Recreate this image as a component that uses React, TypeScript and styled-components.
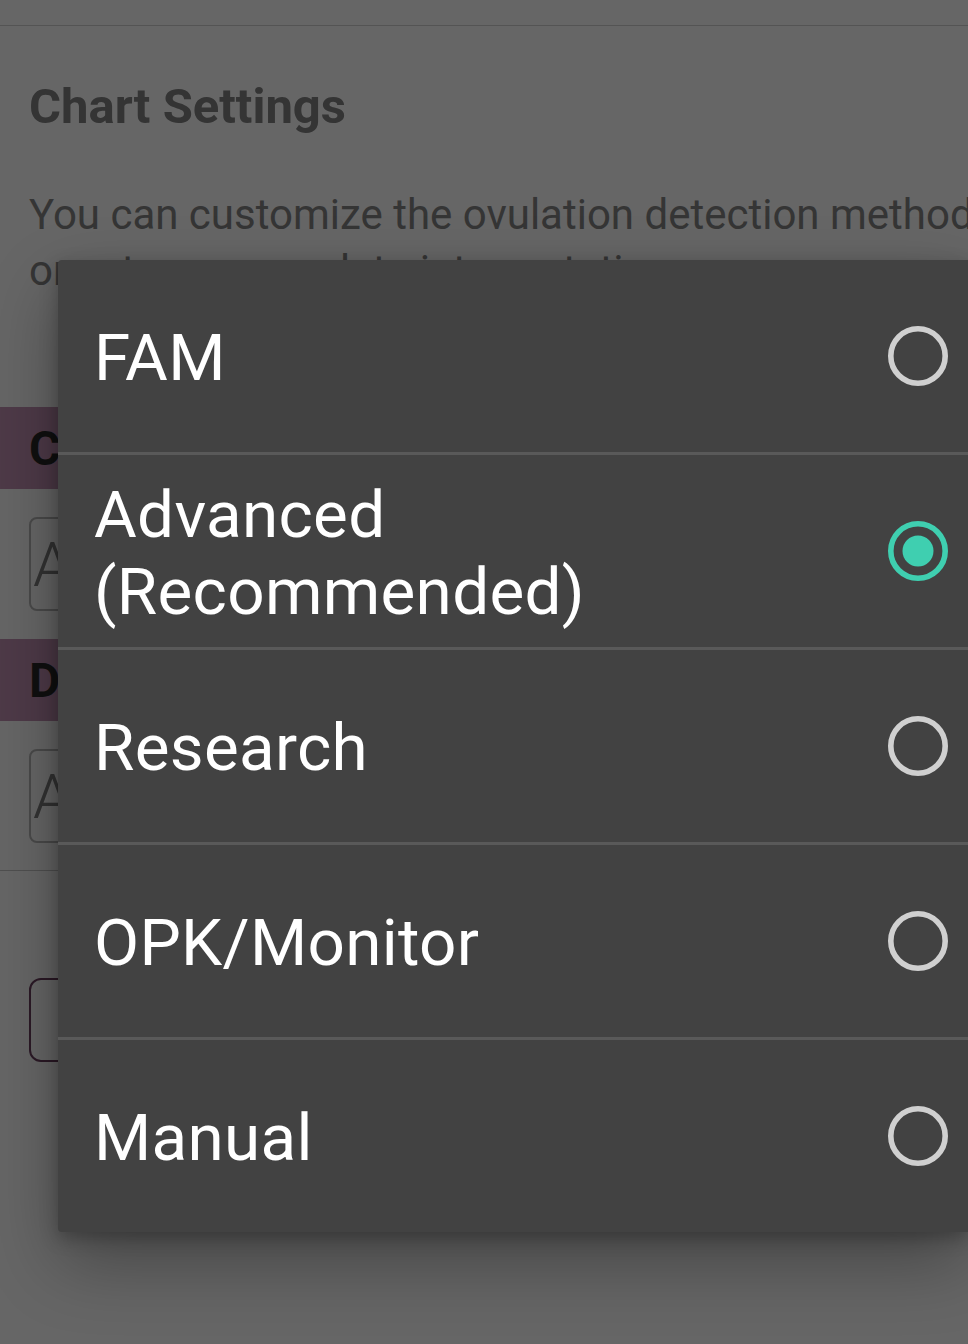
import React from "react";
import styled, { createGlobalStyle } from "styled-components";

const Global = createGlobalStyle`
  html, body { margin: 0; padding: 0; background: #ffffff; overflow: hidden; }
  body { font-family: Roboto, "Noto Sans", sans-serif; }
  #root { width: 968px; height: 1344px; position: relative; overflow: hidden; }
`;

const Page = styled.div`
  width: 968px;
  height: 1344px;
  background: #ffffff;
  display: flex;
  flex-direction: column;
`;

const TopBar = styled.div`
  height: 25px;
  border-bottom: 1px solid #d2d2d2;
  flex-shrink: 0;
`;

const Content = styled.div`
  padding: 0 0 0 29px;
  display: flex;
  flex-direction: column;
`;

const Heading = styled.h1`
  margin: 52px 0 0;
  font-size: 49px;
  line-height: 58px;
  font-weight: 700;
  color: #828282;
  white-space: nowrap;
`;

const Description = styled.p`
  margin: 51px 0 0;
  font-size: 42px;
  line-height: 56px;
  color: #858585;
  width: 960px;
`;

const SectionBar = styled.div`
  margin: 108px 0 0 -29px;
  height: 82px;
  padding-left: 29px;
  background: #c391b4;
  display: flex;
  align-items: center;
  font-size: 48px;
  font-weight: 700;
  color: #2a2a2a;
`;

const SectionBarNext = styled(SectionBar)`
  margin-top: 28px;
`;

const Input = styled.div`
  margin: 28px 29px 0 0;
  height: 94px;
  box-sizing: border-box;
  border: 2px solid #b8b8b8;
  border-radius: 8px;
  display: flex;
  align-items: center;
  padding-left: 2px;
  font-size: 62px;
  font-weight: 300;
  color: #808080;
`;

const Rule = styled.div`
  margin: 27px 0 0 -29px;
  height: 1px;
  background: #c8c8c8;
`;

const OutlineButton = styled.div`
  margin: 107px 29px 0 0;
  height: 84px;
  box-sizing: border-box;
  border: 2px solid #6b3f5f;
  border-radius: 12px;
`;

const Overlay = styled.div`
  position: absolute;
  inset: 0;
  background: rgba(0, 0, 0, 0.6);
`;

const Dialog = styled.div`
  position: absolute;
  top: 260px;
  left: 58px;
  right: 0;
  background: #424242;
  border-radius: 4px 0 0 4px;
  box-shadow: 0 30px 70px rgba(0, 0, 0, 0.32), 0 6px 18px rgba(0, 0, 0, 0.25);
  display: flex;
  flex-direction: column;
`;

const Option = styled.div`
  height: 192px;
  display: flex;
  align-items: center;
  justify-content: space-between;
  padding: 0 19px 0 36px;
  & + & {
    border-top: 3px solid #595959;
  }
`;

const Label = styled.span`
  font-size: 65.6px;
  line-height: 77px;
  color: #ffffff;
  letter-spacing: 0.3px;
  padding-top: 3px;
`;

const Radio: React.FC<{ checked?: boolean }> = ({ checked }) => (
  <svg width="62" height="62" viewBox="0 0 62 62">
    <circle
      cx="31"
      cy="31"
      r="27.2"
      fill="none"
      stroke={checked ? "#3fcfb0" : "#d0d0d0"}
      strokeWidth="5.6"
    />
    {checked && <circle cx="31" cy="31" r="15.5" fill="#3fcfb0" />}
  </svg>
);

const options = [
  { label: ["FAM"], checked: false },
  { label: ["Advanced", "(Recommended)"], checked: true },
  { label: ["Research"], checked: false },
  { label: ["OPK/Monitor"], checked: false },
  { label: ["Manual"], checked: false },
];

export default function App() {
  return (
    <>
      <Global />
      <Page>
        <TopBar />
        <Content>
          <Heading>Chart Settings</Heading>
          <Description>
            You can customize the ovulation detection method or set your own data interpretation.
          </Description>
          <SectionBar>Chart</SectionBar>
          <Input>Advanced</Input>
          <SectionBarNext>Detection</SectionBarNext>
          <Input>Advanced</Input>
          <Rule />
          <OutlineButton />
        </Content>
      </Page>
      <Overlay />
      <Dialog>
        {options.map((o) => (
          <Option key={o.label.join(" ")}>
            <Label>
              {o.label.map((l, i) => (
                <React.Fragment key={l}>
                  {i > 0 && <br />}
                  {l}
                </React.Fragment>
              ))}
            </Label>
            <Radio checked={o.checked} />
          </Option>
        ))}
      </Dialog>
    </>
  );
}
